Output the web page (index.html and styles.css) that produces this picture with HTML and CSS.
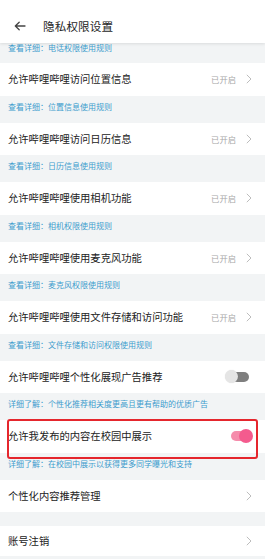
FILE: index.html
```html
<!DOCTYPE html>
<html lang="zh-CN">
<head>
<meta charset="utf-8">
<title>隐私权限设置</title>
<link rel="stylesheet" href="styles.css">
</head>
<body>
<div class="page">
  <header class="bar">
    <svg class="back" width="12" height="10" viewBox="0 0 12 10"><path d="M11 5H1.5M5.2 1.2L1.3 5l3.9 3.8" fill="none" stroke="#444" stroke-width="1.3" stroke-linecap="round" stroke-linejoin="round"/></svg>
    <h1 class="title">隐私权限设置</h1>
  </header>
  <main class="list">
    <div class="detail detail-cut">查看详细：电话权限使用规则</div>

    <div class="row"><span class="label">允许哔哩哔哩访问位置信息</span><span class="status">已开启</span><svg class="chev" width="6" height="10" viewBox="0 0 6 10"><path d="M0.8 0.8L5 5 0.8 9.2" fill="none" stroke="#bdbdbd" stroke-width="1"/></svg></div>
    <div class="detail">查看详细：位置信息使用规则</div>

    <div class="row"><span class="label">允许哔哩哔哩访问日历信息</span><span class="status">已开启</span><svg class="chev" width="6" height="10" viewBox="0 0 6 10"><path d="M0.8 0.8L5 5 0.8 9.2" fill="none" stroke="#bdbdbd" stroke-width="1"/></svg></div>
    <div class="detail">查看详细：日历信息使用规则</div>

    <div class="row"><span class="label">允许哔哩哔哩使用相机功能</span><span class="status">已开启</span><svg class="chev" width="6" height="10" viewBox="0 0 6 10"><path d="M0.8 0.8L5 5 0.8 9.2" fill="none" stroke="#bdbdbd" stroke-width="1"/></svg></div>
    <div class="detail">查看详细：相机权限使用规则</div>

    <div class="row"><span class="label">允许哔哩哔哩使用麦克风功能</span><span class="status">已开启</span><svg class="chev" width="6" height="10" viewBox="0 0 6 10"><path d="M0.8 0.8L5 5 0.8 9.2" fill="none" stroke="#bdbdbd" stroke-width="1"/></svg></div>
    <div class="detail">查看详细：麦克风权限使用规则</div>

    <div class="row"><span class="label">允许哔哩哔哩使用文件存储和访问功能</span><span class="status">已开启</span><svg class="chev" width="6" height="10" viewBox="0 0 6 10"><path d="M0.8 0.8L5 5 0.8 9.2" fill="none" stroke="#bdbdbd" stroke-width="1"/></svg></div>
    <div class="detail">查看详细：文件存储和访问权限使用规则</div>

    <div class="row"><span class="label">允许哔哩哔哩个性化展现广告推荐</span><span class="switch switch-off"><span class="track"></span><span class="knob"></span></span></div>
    <div class="detail">详细了解：个性化推荐相关度更高且更有帮助的优质广告</div>

    <div class="row row-marked"><span class="label">允许我发布的内容在校园中展示</span><span class="switch switch-on"><span class="track"></span><span class="knob"></span></span><span class="mark"></span></div>
    <div class="detail">详细了解：在校园中展示以获得更多同学曝光和支持</div>

    <div class="row"><span class="label">个性化内容推荐管理</span><svg class="chev" width="6" height="10" viewBox="0 0 6 10"><path d="M0.8 0.8L5 5 0.8 9.2" fill="none" stroke="#bdbdbd" stroke-width="1"/></svg></div>
    <div class="gap"></div>
    <div class="row row-last"><span class="label">账号注销</span><svg class="chev" width="6" height="10" viewBox="0 0 6 10"><path d="M0.8 0.8L5 5 0.8 9.2" fill="none" stroke="#bdbdbd" stroke-width="1"/></svg></div>
  </main>
</div>
</body>
</html>
```
FILE: styles.css
```css
* { box-sizing: border-box; }
html, body {
  margin: 0;
  padding: 0;
  background: #f2f4f5;
  font-family: "Noto Sans CJK SC", "Noto Sans", sans-serif;
}
.page {
  width: 265px;
  min-height: 559px;
  overflow: hidden;
}
.bar {
  position: relative;
  z-index: 2;
  height: 43px;
  background: #fff;
  display: flex;
  align-items: center;
  padding: 9px 0 0 14px;
  box-shadow: 0 1px 3px rgba(0, 0, 0, 0.10);
}
.back { display: block; flex: none; }
.title {
  margin: 0 0 0 17px;
  font-size: 11.6px;
  font-weight: 400;
  color: #262626;
  line-height: 14px;
  letter-spacing: 0.1px;
}
.list { display: flex; flex-direction: column; }
.row {
  height: 32.5px;
  background: #fff;
  display: flex;
  align-items: center;
  padding: 0 13px 0 8px;
}
.row-last { height: 30px; }
.label {
  flex: 1;
  font-size: 10.3px;
  color: #222;
  line-height: 14px;
  white-space: nowrap;
}
.status {
  font-size: 8.3px;
  color: #a8a8a8;
  margin-right: 10px;
  line-height: 10px;
}
.chev { display: block; flex: none; }
.detail {
  height: 27px;
  padding: 6px 8px 0;
  font-size: 8px;
  line-height: 10px;
  color: #3d9ccd;
  white-space: nowrap;
}
.detail-cut {
  height: 20px;
  padding-top: 0;
  margin-top: 0;
}
.gap { height: 14px; }
.switch {
  display: grid;
  align-items: center;
  flex: none;
}
.switch > span { grid-area: 1 / 1; display: block; }
.switch-off { width: 24px; height: 14px; margin-right: 3px; }
.switch-off .track {
  justify-self: end;
  width: 17px;
  height: 10px;
  border-radius: 5px;
  background: #7f7f7f;
}
.switch-off .knob {
  justify-self: start;
  width: 13px;
  height: 13px;
  border-radius: 50%;
  background: #e5e5e5;
  box-shadow: 0 0 1px rgba(0, 0, 0, 0.15);
}
.switch-on { width: 22px; height: 14px; margin-right: -1px; }
.switch-on .track {
  justify-self: start;
  width: 19px;
  height: 10px;
  border-radius: 5px;
  background: #f58cab;
}
.switch-on .knob {
  justify-self: end;
  width: 14px;
  height: 14px;
  border-radius: 50%;
  background: #f45b8e;
}
.row-marked { position: relative; }
.mark {
  position: absolute;
  z-index: 1;
  top: -1px;
  left: 7px;
  right: 7px;
  height: 40px;
  border: 2px solid #e5262d;
  border-radius: 3px;
  pointer-events: none;
}
```
